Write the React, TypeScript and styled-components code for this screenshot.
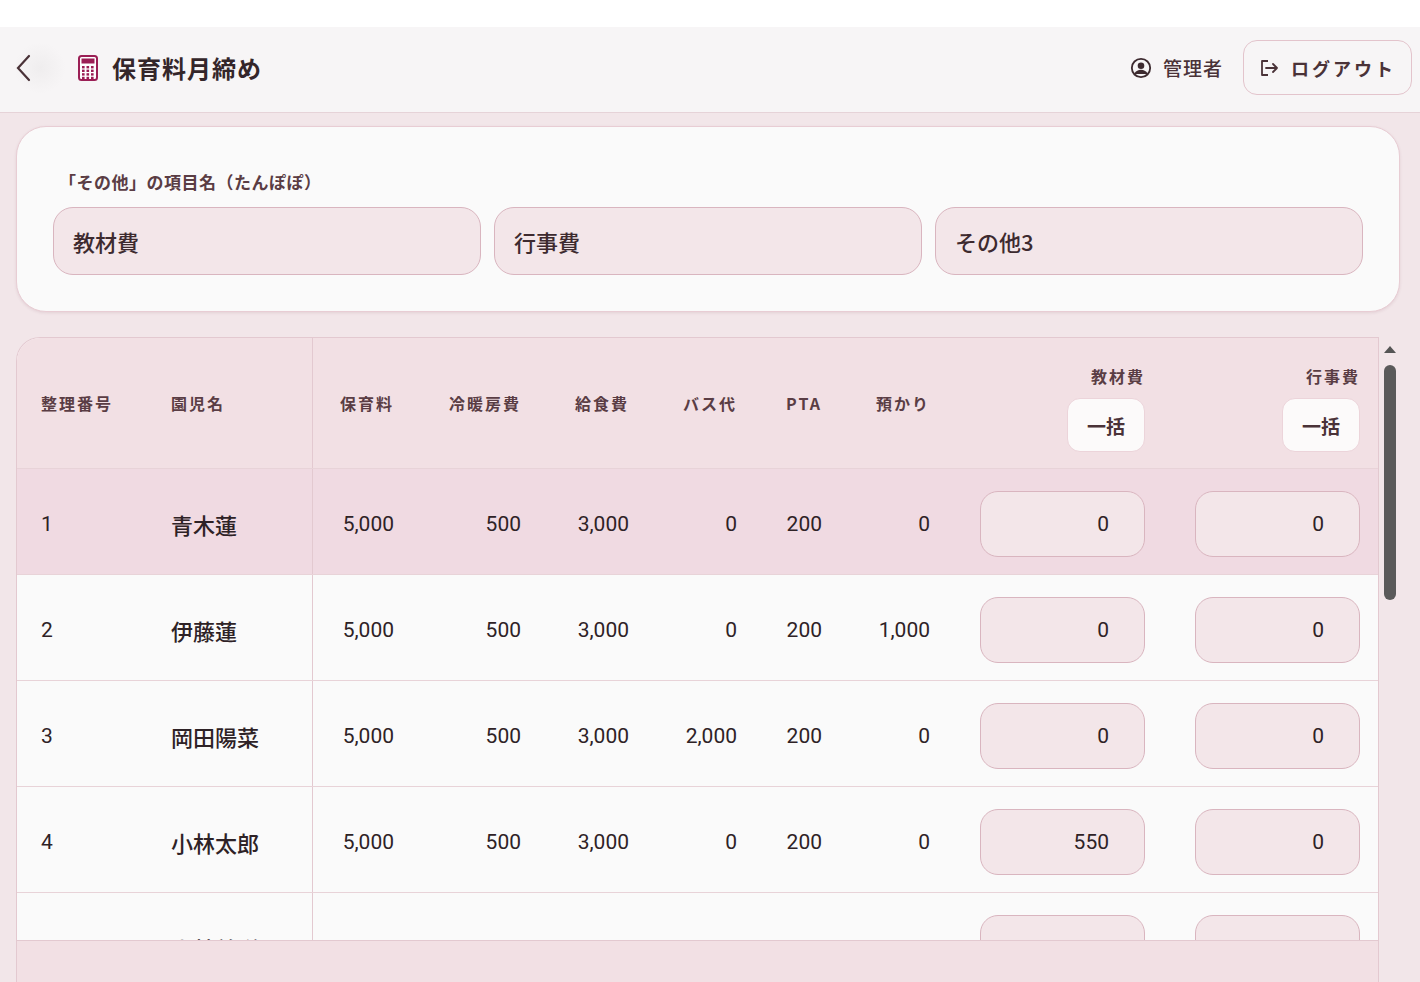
import React from "react";
import styled, { createGlobalStyle } from "styled-components";

const G = createGlobalStyle`
  html,body{margin:0;padding:0;height:100%;overflow:hidden;background:#fff;}
  body{font-family:"Noto Sans CJK JP","Noto Sans",sans-serif;color:#3d2a2f;}
`;
const Page = styled.div`display:flex;flex-direction:column;height:982px;padding-top:27px;box-sizing:border-box;`;
const Header = styled.header`height:86px;background:#f7f5f6;border-bottom:1px solid #e6d3d8;display:flex;align-items:center;padding:0 8px 4px 14px;box-sizing:border-box;flex-shrink:0;`;
const Back = styled.button`width:52px;height:52px;border:none;background:radial-gradient(circle,#efedee 0%,#f7f5f6 70%);border-radius:50%;display:flex;align-items:center;justify-content:flex-start;padding:0;cursor:pointer;`;
const Title = styled.h1`margin:0 0 0 12px;display:flex;align-items:center;gap:14px;font-size:24px;font-weight:700;color:#34262a;letter-spacing:1px;`;
const Right = styled.div`margin-left:auto;display:flex;align-items:center;gap:20px;`;
const User = styled.div`display:flex;align-items:center;gap:11px;font-size:19px;font-weight:500;color:#4a3238;letter-spacing:1px;`;
const Logout = styled.button`height:55px;width:169px;border:1px solid #e3c4cc;border-radius:14px;background:transparent;display:flex;align-items:center;justify-content:center;gap:12px;font-family:inherit;font-size:18px;font-weight:700;color:#4a3238;letter-spacing:3px;`;
const Body = styled.main`flex:1;background:#f2e6e9;padding:13px 20px 0 16px;display:flex;flex-direction:column;gap:25px;min-height:0;`;
const Card = styled.section`background:#fafafa;border:1px solid #e8cdd4;border-radius:30px;box-shadow:0 1px 3px rgba(120,60,80,.12);padding:42px 36px 36px 36px;display:flex;flex-direction:column;gap:13px;`;
const Label = styled.div`font-size:17px;font-weight:700;color:#5a3d44;padding-left:6px;letter-spacing:0.5px;`;
const Inputs = styled.div`display:grid;grid-template-columns:repeat(3,1fr);gap:13px;`;
const TextBox = styled.div`height:66px;border:1px solid #d9b5bf;border-radius:20px;background:#f3e6e9;display:flex;align-items:center;padding:0 19px;font-size:22px;font-weight:500;color:#3d2a2f;`;
const TableArea = styled.div`flex:1;display:flex;min-height:0;`;
const Table = styled.div`position:relative;width:1361px;border:1px solid #e3c9d0;border-bottom:none;border-radius:24px 0 0 0;overflow:hidden;background:#fafafa;`;
const cols = "154px 142px 81px 127px 108px 108px 85px 108px 215px 215px 18px";
const Row = styled.div<{ $bg: string; $h: number }>`display:grid;grid-template-columns:${cols};height:${p => p.$h}px;background:${p => p.$bg};border-bottom:1px solid #e8d3d8;`;
const Cell = styled.div<{ $num?: boolean; $pl?: number; $sep?: boolean; $jp?: boolean }>`display:flex;align-items:center;padding-top:4px;box-sizing:border-box;justify-content:${p => (p.$num ? "flex-end" : "flex-start")};padding-left:${p => p.$pl ?? 0}px;font-family:${p => (p.$jp ? '"Noto Sans CJK JP",sans-serif' : 'Roboto,"Noto Sans CJK JP",sans-serif')};font-size:${p => (p.$jp ? 22 : 21)}px;font-weight:${p => (p.$jp ? 500 : 400)};color:#2e2226;${p => (p.$sep ? "border-right:1px solid #e3c9d0;" : "")}`;
const HCell = styled(Cell)`font-family:"Noto Sans CJK JP",sans-serif;font-size:16px;font-weight:700;color:#5a3d44;letter-spacing:2px;padding-top:0;`;
const HStack = styled.div`display:flex;flex-direction:column;align-items:flex-end;gap:10px;margin-top:10px;`;
const Bulk = styled.button`width:78px;height:54px;border-radius:13px;border:1px solid #ecd4da;background:#fcfafa;font-family:inherit;font-size:19px;font-weight:700;color:#4a3238;letter-spacing:0;`;
const NumBox = styled.div`width:165px;height:66px;box-sizing:border-box;border:1px solid #d9b5bf;border-radius:18px;background:#f3e6e9;display:flex;align-items:center;justify-content:flex-end;padding-right:35px;font-family:Roboto,sans-serif;font-size:21px;color:#2e2226;`;
const Footer = styled.div`position:absolute;left:0;right:0;bottom:0;height:41px;background:#f2e0e4;border-top:1px solid #e3c9d0;`;
const Scroll = styled.div`width:20px;position:relative;`;
const Arrow = styled.div`position:absolute;left:5px;top:9px;width:0;height:0;border-left:6px solid transparent;border-right:6px solid transparent;border-bottom:7px solid #555;`;
const Thumb = styled.div`position:absolute;left:5px;top:28px;width:12px;height:235px;border-radius:6px;background:#5a5a5a;`;

const data = [
  ["1", "青木蓮", "5,000", "500", "3,000", "0", "200", "0", "0", "0"],
  ["2", "伊藤蓮", "5,000", "500", "3,000", "0", "200", "1,000", "0", "0"],
  ["3", "岡田陽菜", "5,000", "500", "3,000", "2,000", "200", "0", "0", "0"],
  ["4", "小林太郎", "5,000", "500", "3,000", "0", "200", "0", "550", "0"],
  ["5", "小林美咲", "5,000", "500", "3,000", "0", "200", "0", "0", "0"],
];

export default function App() {
  return (
    <Page>
      <G />
      <Header>
        <Back aria-label="back">
          <svg width="22" height="30" viewBox="0 0 22 30"><path d="M15 3 L4 15 L15 27" fill="none" stroke="#4a3238" strokeWidth="2.2" strokeLinecap="round" /></svg>
        </Back>
        <Title>
          <svg width="20" height="26" viewBox="0 0 20 26">
            <rect x="1" y="1" width="18" height="24" rx="2.5" fill="#fff" stroke="#9b1f55" strokeWidth="2" />
            <rect x="3.5" y="3.5" width="13" height="5" fill="#9b1f55" />
            {[0, 1, 2, 3].map(r => [0, 1, 2].map(c => <rect key={r + "" + c} x={4 + c * 4.5} y={11 + r * 3.6} width="2.6" height="2.4" fill="#9b1f55" />))}
          </svg>
          保育料月締め
        </Title>
        <Right>
          <User>
            <svg width="22" height="22" viewBox="0 0 24 24"><circle cx="12" cy="12" r="10" fill="none" stroke="#3d2a2f" strokeWidth="2" /><circle cx="12" cy="9.5" r="3.6" fill="#3d2a2f" /><path d="M5.5 18.5c1.8-2.6 4-3.6 6.5-3.6s4.7 1 6.5 3.6" fill="#3d2a2f" stroke="#3d2a2f" strokeWidth="2" /></svg>
            管理者
          </User>
          <Logout>
            <svg width="20" height="18" viewBox="0 0 20 18"><path d="M9 2H3v14h6" fill="none" stroke="#4a3238" strokeWidth="1.8" strokeLinejoin="round" /><path d="M7 9h11M14 5l4 4-4 4" fill="none" stroke="#4a3238" strokeWidth="1.8" strokeLinecap="round" strokeLinejoin="round" /></svg>
            ログアウト
          </Logout>
        </Right>
      </Header>
      <Body>
        <Card>
          <Label>「その他」の項目名（たんぽぽ）</Label>
          <Inputs>
            <TextBox>教材費</TextBox>
            <TextBox>行事費</TextBox>
            <TextBox>その他3</TextBox>
          </Inputs>
        </Card>
        <TableArea>
          <Table>
            <Row $bg="#f2e0e4" $h={130}>
              <HCell $pl={24}>整理番号</HCell>
              <HCell $sep>園児名</HCell>
              <HCell $num>保育料</HCell>
              <HCell $num>冷暖房費</HCell>
              <HCell $num>給食費</HCell>
              <HCell $num>バス代</HCell>
              <HCell $num>PTA</HCell>
              <HCell $num>預かり</HCell>
              <HCell $num><HStack>教材費<Bulk>一括</Bulk></HStack></HCell>
              <HCell $num><HStack>行事費<Bulk>一括</Bulk></HStack></HCell>
              <HCell />
            </Row>
            {data.map((d, i) => (
              <Row key={i} $bg={i === 0 ? "#f0dae2" : "#fafafa"} $h={105}>
                <Cell $pl={24}>{d[0]}</Cell>
                <Cell $sep $jp>{d[1]}</Cell>
                {d.slice(2, 8).map((v, j) => <Cell key={j} $num>{v}</Cell>)}
                <Cell $num><NumBox>{d[8]}</NumBox></Cell>
                <Cell $num><NumBox>{d[9]}</NumBox></Cell>
                <Cell />
              </Row>
            ))}
            <Footer />
          </Table>
          <Scroll><Arrow /><Thumb /></Scroll>
        </TableArea>
      </Body>
    </Page>
  );
}
